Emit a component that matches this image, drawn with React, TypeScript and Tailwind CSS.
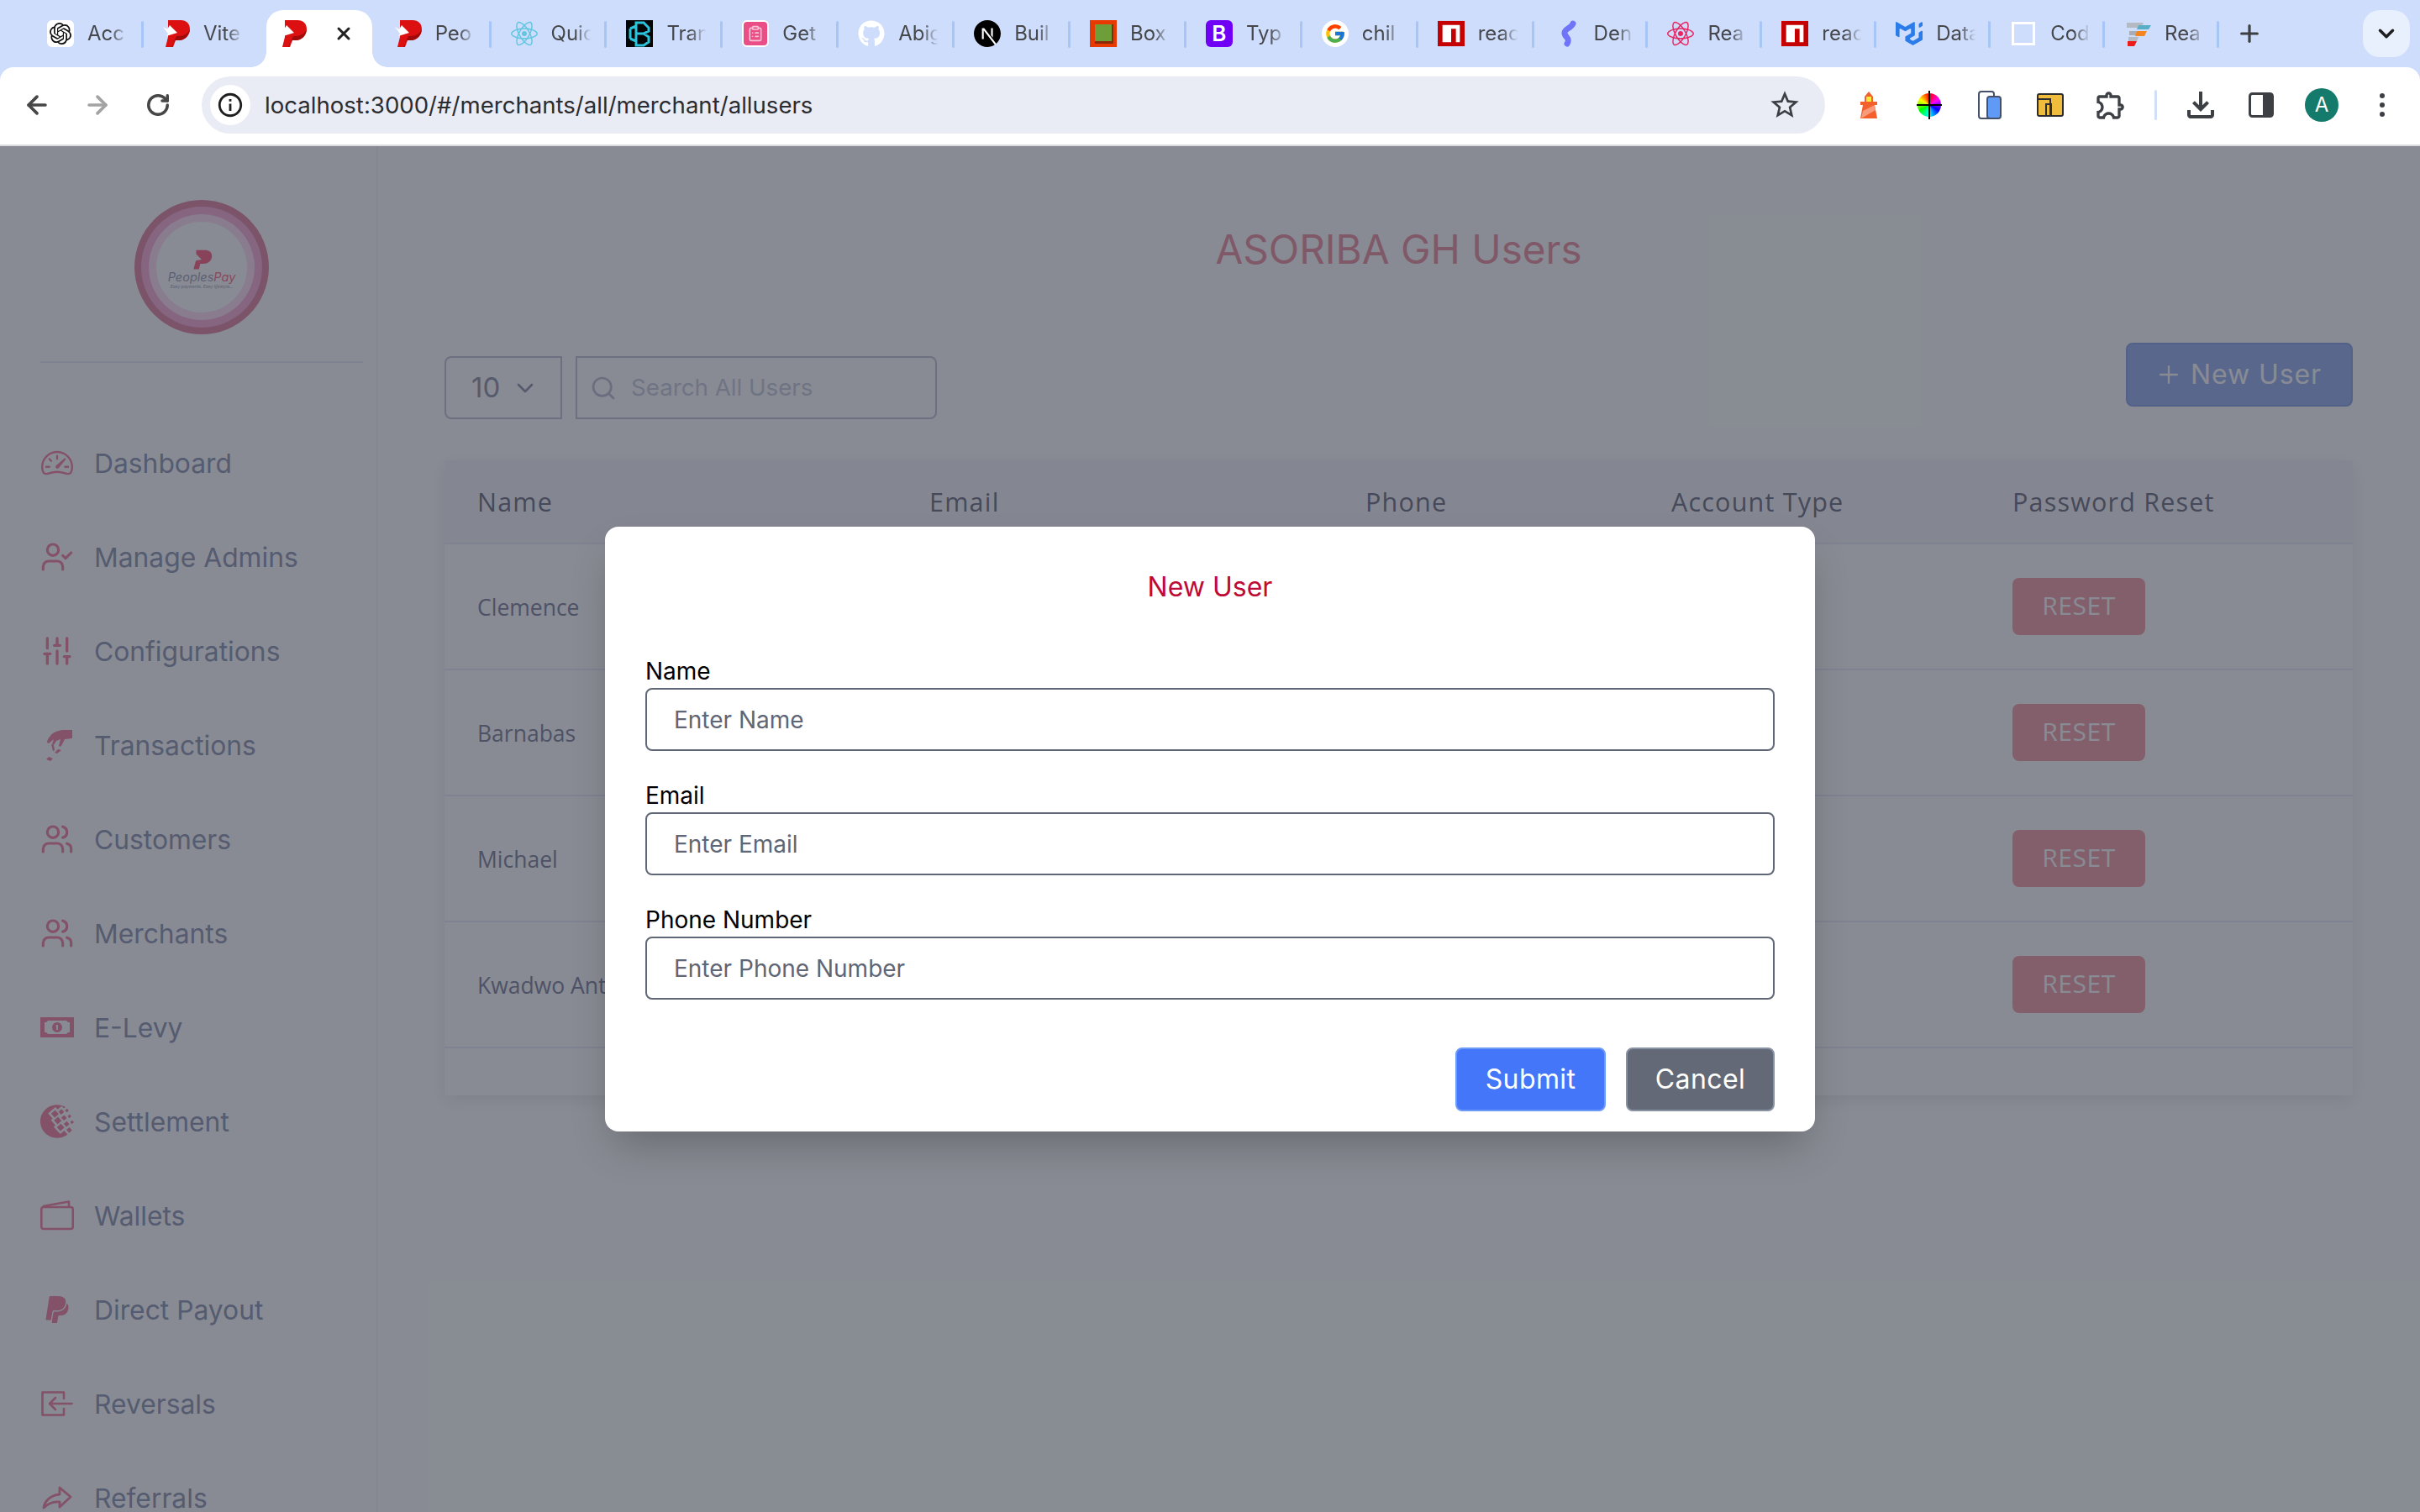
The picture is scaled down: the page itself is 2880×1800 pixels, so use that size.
import { ArrowLeft, ArrowRight, ChevronDown, ClipboardList, Plus, RotateCw, Search, SlidersVertical, UserCheck, Users, X } from "lucide-react";
import type { ReactNode } from "react";
import { BsSpeedometer2 } from "react-icons/bs";
import { FaGithub, FaPaypal } from "react-icons/fa";
import { FcGoogle } from "react-icons/fc";
import { MdInfoOutline, MdOutlineExtension, MdOutlineFileDownload, MdStarBorder } from "react-icons/md";
import { SiMui, SiNextdotjs, SiOpenai, SiReact, SiWebmoney } from "react-icons/si";

const PeoplesLogo = ({ size = 32 }: { size?: number }) => (
  <svg width={size} height={size} viewBox="0 0 32 32">
    <path d="M6 0h15c7 0 11 4 11 11s-6 13-13 13h-4l-3 8H3l3-12z" fill="#dc1010" />
    <path d="M13 24h6c7 0 12-6 13-13-2 5-8 8-13 8h-3l-6 13h1z" fill="#a00a0a" />
    <path d="M0 8l5 3 3-5 9 9-13 4 2-3z" fill="#fff" />
  </svg>
);

const NpmIcon = () => (
  <svg width="34" height="32" viewBox="0 0 34 32">
    <rect width="34" height="32" fill="#c40000" />
    <path d="M6 5h22v22h-5V10h-6v17H6z" fill="#fff" />
  </svg>
);

const favicons: ReactNode[] = [
  <div className="flex h-8 w-8 items-center justify-center rounded-md bg-white"><SiOpenai size={26} color="#111" /></div>,
  <PeoplesLogo />,
  <PeoplesLogo />,
  <PeoplesLogo />,
  <SiReact size={32} color="#62c6e0" />,
  <svg width="32" height="32" viewBox="0 0 32 32">
    <rect width="32" height="32" fill="#050505" />
    <path d="M12 3h9l6 6v4l-6 3 6 4v6l-6 4h-9zM12 16h9M12 3v26M5 10l7-3M5 22l7 3M5 10v12" fill="none" stroke="#2cc3dc" strokeWidth="3" />
  </svg>,
  <div className="flex h-8 w-8 items-center justify-center rounded-md border-2 border-white bg-[#e94f86]"><ClipboardList size={20} color="#f9c3d7" /></div>,
  <FaGithub size={32} color="#fff" />,
  <div className="flex h-8 w-8 items-center justify-center rounded-full bg-white"><SiNextdotjs size={32} color="#000" /></div>,
  <svg width="32" height="32" viewBox="0 0 32 32">
    <rect width="32" height="32" fill="#e83a00" />
    <rect x="6" y="5" width="22" height="23" fill="#8a2a08" />
    <rect x="6" y="5" width="20" height="20" fill="#6e9e3a" />
  </svg>,
  <div className="flex h-8 w-8 items-center justify-center rounded-md bg-[#6f00f5] text-[26px] font-semibold leading-none text-white">B</div>,
  <div className="flex h-8 w-8 items-center justify-center rounded-full bg-white"><FcGoogle size={26} /></div>,
  <NpmIcon />,
  <svg width="32" height="32" viewBox="0 0 32 32" fill="none">
    <path d="M23 4C21 10 12 10 13 16c1 5 7 5 3 12" stroke="#6f74f8" strokeWidth="7" strokeLinecap="round" />
  </svg>,
  <SiReact size={32} color="#ea2560" />,
  <NpmIcon />,
  <SiMui size={32} color="#2b7ce8" />,
  <div className="h-7 w-7 border-[3px] border-white" />,
  <svg width="32" height="32" viewBox="0 0 32 32">
    <path d="M3 3h20l-3 6H3z" fill="#b4b9c2" />
    <path d="M17 6h15l-3 5H15z" fill="#57aec6" />
    <path d="M6 13h10l-2 5H6z" fill="#a9adb6" />
    <path d="M15 13h12l-3 6H13z" fill="#f5851f" />
    <path d="M5 20h12l-2 5H5z" fill="#b4b9c2" />
    <path d="M4 25h11l-3 6H4z" fill="#ea1c1c" />
  </svg>,
];

const tabTitles = ["Acc", "Vite", "", "Peo", "Quic", "Tran", "Get", "Abig", "Buil", "Box", "Typ", "chil", "reac", "Den", "Rea", "reac", "Data", "Cod", "Rea"];

const ActiveTab = () => (
  <div className="relative ml-2 mr-1 mt-3 flex h-[68px] flex-1 items-start rounded-t-[20px] bg-white pl-[16px] pt-3">
    <span className="absolute -left-[18px] bottom-0 h-[18px] w-[18px] bg-[radial-gradient(circle_at_0_0,#cfddfd_17.5px,#ffffff_18px)]" />
    <span className="absolute -right-[18px] bottom-0 h-[18px] w-[18px] bg-[radial-gradient(circle_at_100%_0,#cfddfd_17.5px,#ffffff_18px)]" />
    {favicons[2]}
    <X className="ml-[32px] mt-[4px] text-[#222]" size={24} strokeWidth={3} />
  </div>
);

const TabStrip = () => (
  <div className="flex h-20 items-start pl-[33px]">
    {tabTitles.map((title, i) => (
      <div key={i} className={i < 13 ? "relative flex h-20 w-[137.9px] shrink-0" : "relative flex h-20 w-[135.9px] shrink-0"}>
        {i === 2 ? (
          <ActiveTab />
        ) : (
          <div className="mt-6 flex h-8 w-full items-center pl-[23px]">
            <div className="flex w-[32px] shrink-0 items-center justify-center">{favicons[i]}</div>
            <span className="ml-4 block w-[56px] whitespace-nowrap text-[24px] leading-8 text-[#45474b] [mask-image:linear-gradient(to_right,#000_50%,transparent_85%)]">
              {title}
            </span>
          </div>
        )}
        {i !== 1 && i !== 2 && (
          <span className="absolute right-0 top-[25px] h-8 w-[3px] rounded-full bg-[#a8c5f8]" />
        )}
      </div>
    ))}
    <div className="flex h-20 w-[72px] items-start justify-center pt-[24px]">
      <Plus size={32} color="#3c3f43" strokeWidth={2.4} />
    </div>
    <div className="ml-auto mr-3 mt-3 flex h-14 w-14 items-center justify-center rounded-[20px] bg-[#e8effd]">
      <ChevronDown size={30} color="#1f1f1f" strokeWidth={2.8} />
    </div>
  </div>
);

const ToolbarSlot = ({ children }: { children: ReactNode }) => (
  <div className="flex h-[72px] w-[72px] shrink-0 items-center justify-center">{children}</div>
);

const Toolbar = () => (
  <div className="flex h-[94px] items-center rounded-t-[16px] border-b-2 border-[#dadce0] bg-white pb-[2px] pl-2">
    <ToolbarSlot><ArrowLeft size={34} color="#474747" strokeWidth={2.6} /></ToolbarSlot>
    <ToolbarSlot><ArrowRight size={34} color="#a3a3a3" strokeWidth={2.6} /></ToolbarSlot>
    <ToolbarSlot><RotateCw size={30} color="#474747" strokeWidth={2.8} /></ToolbarSlot>
    <div className="ml-4 flex h-[68px] w-[1932px] items-center rounded-full bg-[#e9ebf5] pl-[10px]">
      <div className="flex h-12 w-12 items-center justify-center rounded-full bg-white">
        <MdInfoOutline size={34} color="#1f1f1f" />
      </div>
      <span className="ml-[17px] pt-[2px] text-[27.6px] text-[#2b2c30]">localhost:3000/#/merchants/all/merchant/allusers</span>
      <MdStarBorder className="ml-auto mr-[28px]" size={40} color="#3c3f43" />
    </div>
    <div className="ml-4 flex items-center">
      <ToolbarSlot>
        <svg width="26" height="32" viewBox="0 0 26 32">
          <path d="M13 0l5 6v6h5v4h-3l3 16H3l3-16H3v-4h5V6z" fill="#f4602c" />
          <rect x="10" y="6" width="6" height="6" fill="#fce83a" />
          <path d="M4 32l2-9 14-7 1 6z" fill="#f99a7a" />
        </svg>
      </ToolbarSlot>
      <ToolbarSlot>
        <div className="relative flex h-[34px] w-[34px] items-center justify-center">
          <div className="h-7 w-7 rounded-full bg-[conic-gradient(#ff0000,#ff00ff,#0000ff,#00ffff,#00ff00,#ffff00,#ff0000)]" />
          <span className="absolute h-[2px] w-[30px] bg-black" />
          <span className="absolute h-[34px] w-[2px] bg-black" />
        </div>
      </ToolbarSlot>
      <ToolbarSlot>
        <svg width="28" height="34" viewBox="0 0 28 34">
          <rect x="1" y="1" width="18" height="32" rx="3" fill="#fff" stroke="#45516b" strokeWidth="2" />
          <rect x="11" y="7" width="16" height="26" rx="3" fill="#5f9bf6" stroke="#45516b" strokeWidth="2" />
        </svg>
      </ToolbarSlot>
      <ToolbarSlot>
        <svg width="32" height="28" viewBox="0 0 32 28">
          <rect x="1" y="1" width="30" height="26" rx="2" fill="#f0bc3c" stroke="#2d2d2d" strokeWidth="2" />
          <path d="M2 7h14v19M11 26V13h6v13" fill="none" stroke="#2d2d2d" strokeWidth="2" />
        </svg>
      </ToolbarSlot>
      <ToolbarSlot><MdOutlineExtension size={40} color="#3c3f43" /></ToolbarSlot>
    </div>
    <span className="ml-4 h-9 w-[3px] rounded-full bg-[#d0def9]" />
    <div className="ml-4 flex items-center">
      <ToolbarSlot><MdOutlineFileDownload size={48} color="#3c3f43" /></ToolbarSlot>
      <ToolbarSlot>
        <svg width="30" height="30" viewBox="0 0 30 30">
          <rect x="1.5" y="1.5" width="27" height="27" rx="3" fill="#fff" stroke="#3c3f43" strokeWidth="3" />
          <rect x="17" y="1.5" width="11.5" height="27" fill="#3c3f43" />
        </svg>
      </ToolbarSlot>
      <ToolbarSlot>
        <div className="flex h-10 w-10 items-center justify-center rounded-full bg-[#137a6c] text-[24px] text-white">A</div>
      </ToolbarSlot>
      <ToolbarSlot>
        <div className="flex flex-col gap-[5px]">
          <span className="h-[6px] w-[6px] rounded-full bg-[#3c3f43]" />
          <span className="h-[6px] w-[6px] rounded-full bg-[#3c3f43]" />
          <span className="h-[6px] w-[6px] rounded-full bg-[#3c3f43]" />
        </div>
      </ToolbarSlot>
    </div>
  </div>
);

const HandIcon = () => (
  <svg width="40" height="40" viewBox="0 0 40 40" fill="currentColor">
    <path d="M38 2v10l-9 1c-2 4-3 6-5 9l-2-1 2-8-5 2-3 5-2-1 2-6-6 5-2-1c0-3 2-6 4-8 3-4 8-6 14-7z" />
    <path d="M13 19l3 1 1 6-2 1zM21 25l4 1-5 4-3-1zM7 37l3-3 5 2-3 3z" />
  </svg>
);

const CashIcon = () => (
  <svg width="40" height="24" viewBox="0 0 40 24" fill="currentColor">
    <path fillRule="evenodd" d="M0 0h40v24H0zM5 6v12h2l2 2h22l2-2h2V6h-2l-2-2H9L7 6z" />
    <path fillRule="evenodd" d="M20 6a6 6 0 1 1 0 12 6 6 0 0 1 0-12zm-1 3v1l-1 1h1v4h2V9z" />
  </svg>
);

const WalletIcon = () => (
  <svg width="40" height="36" viewBox="0 0 40 36" fill="none" stroke="currentColor" strokeWidth="2.6" strokeLinejoin="round">
    <rect x="1.3" y="8" width="37.4" height="26" rx="2.5" />
    <path d="M3 7l31-5.5V7" />
  </svg>
);

const ReversalIcon = () => (
  <svg width="38" height="30" viewBox="0 0 38 30" fill="none" stroke="currentColor" strokeWidth="2.6" strokeLinecap="round" strokeLinejoin="round">
    <path d="M27 9V1.5H1.5v27H27V21" />
    <path d="M36.5 15H11M17 8l-7 7 7 7" />
  </svg>
);

const ShareIcon = () => (
  <svg width="36" height="28" viewBox="0 0 36 28" fill="none" stroke="currentColor" strokeWidth="2.8" strokeLinejoin="round">
    <path d="M21 2l13 11-13 12v-6C13 18 7 21 2 26c1-8 8-15 19-16z" />
  </svg>
);

const sideItems: { label: string; icon: ReactNode }[] = [
  { label: "Dashboard", icon: <BsSpeedometer2 size={38} /> },
  { label: "Manage Admins", icon: <UserCheck size={46} strokeWidth={1.9} /> },
  { label: "Configurations", icon: <SlidersVertical size={44} strokeWidth={2} /> },
  { label: "Transactions", icon: <HandIcon /> },
  { label: "Customers", icon: <Users size={46} strokeWidth={1.9} /> },
  { label: "Merchants", icon: <Users size={46} strokeWidth={1.9} /> },
  { label: "E-Levy", icon: <CashIcon /> },
  { label: "Settlement", icon: <SiWebmoney size={42} /> },
  { label: "Wallets", icon: <WalletIcon /> },
  { label: "Direct Payout", icon: <FaPaypal size={36} /> },
  { label: "Reversals", icon: <ReversalIcon /> },
  { label: "Referrals", icon: <ShareIcon /> },
];

const Sidebar = () => (
  <aside className="w-[450px] shrink-0 border-r-2 border-[#f7f7fb]">
    <div className="flex w-[480px] justify-center pb-8 pt-16">
      <div className="h-40 w-40 rounded-full bg-[#e790ab] p-2">
        <div className="h-full w-full rounded-full bg-[#fbb2d9] p-[9px]">
          <div className="h-full w-full rounded-full bg-[#ffe0f5] p-[9px]">
            <div className="flex h-full w-full flex-col items-center justify-center rounded-full bg-white pt-1">
              <svg width="26" height="24" viewBox="0 0 32 28">
                <path d="M8 0h12c7 0 11 3 11 9s-5 11-12 11h-5l-2 8H4l4-14z" fill="#ff6f8c" />
                <path d="M0 6l5 4 3-4 8 8-12 2 2-3z" fill="#fff" />
              </svg>
              <span className="text-[14.5px] italic leading-[17px] text-[#a7a8bd]">
                Peoples<span className="text-[#ff7a94]">Pay</span>
              </span>
              <span className="text-[5px] italic leading-[6px] text-[#a7a8bd]">Easy payments. Easy lifestyle...</span>
            </div>
          </div>
        </div>
      </div>
    </div>
    <div className="ml-12 w-[384px] border-t-2 border-[#edeef9]" />
    <nav className="mt-[63px]">
      {sideItems.map((item) => (
        <div key={item.label} className="flex h-28 items-center pl-12">
          <div className="flex w-10 shrink-0 items-center justify-center text-[#f48aa8]">{item.icon}</div>
          <span className="ml-[24px] pt-[2px] text-[31.8px] text-[#999fb8]">{item.label}</span>
        </div>
      ))}
    </nav>
  </aside>
);

const users = ["Clemence", "Barnabas", "Michael", "Kwadwo Anthony"];
const headers = ["Name", "Email", "Phone", "Account Type", "Password Reset"];

const UsersPage = () => (
  <main className="flex-1 pl-[79px] pr-[80px] pt-[93px]">
    <h1 className="text-center text-[47.6px] leading-[60px] text-[#ee9bab]">ASORIBA GH Users</h1>
    <div className="mt-[81px] flex items-start justify-between">
      <div className="mt-4 flex gap-4">
        <div className="flex h-[75px] w-[140px] items-center rounded-l-lg border-2 border-[#c7c8d9] pl-[30px] text-[33px] text-[#999cb1]">
          10
          <ChevronDown className="ml-[14px]" size={32} color="#999cb1" strokeWidth={2} />
        </div>
        <div className="flex h-[75px] w-[430px] items-center rounded-r-lg border-2 border-[#c7c8d9] pl-[15px] text-[27.7px] text-[#cdd0e1]">
          <Search size={32} color="#c2c5d8" strokeWidth={2} />
          <span className="ml-[17px] pt-[1px]">Search All Users</span>
        </div>
      </div>
      <button className="flex h-[76px] w-[270px] items-center rounded-lg border-2 border-[#94aaea] bg-[#a0b6f2] pl-[32px] text-[32px] text-white">
        <Plus size={34} strokeWidth={1.6} />
        <span className="ml-[9px] tracking-[0.9px]">New User</span>
      </button>
    </div>
    <div className="mt-[49px] overflow-hidden shadow-[0_6px_20px_rgba(0,0,0,0.08)]">
      <table className="w-[2271px] table-fixed font-['Open_Sans',sans-serif]">
        <colgroup>
          <col className="w-[538px]" />
          <col className="w-[519px]" />
          <col className="w-[364px]" />
          <col className="w-[406px]" />
          <col className="w-[444px]" />
        </colgroup>
        <thead>
          <tr className="h-[99px] border-b-2 border-[#ededf9] bg-[#f6f6fa]">
            {headers.map((h) => (
              <th key={h} className="pl-[39px] pt-[1px] text-left text-[30.5px] font-normal tracking-[1.2px] text-[#7a7b8a]">{h}</th>
            ))}
          </tr>
        </thead>
        <tbody>
          {users.map((name) => (
            <tr key={name} className="h-[150px] border-b-2 border-[#ededf9]">
              <td className="whitespace-nowrap pl-[39px] pt-[3px] text-[26.5px] text-[#8a8ca5]">{name}</td>
              <td />
              <td />
              <td />
              <td className="pl-[39px]">
                <button className="h-[68px] w-[158px] rounded-lg bg-[#f5a6b0] pb-[3px] text-[30px] tracking-[0.5px] text-white">RESET</button>
              </td>
            </tr>
          ))}
          <tr className="h-[57px]"><td colSpan={5} /></tr>
        </tbody>
      </table>
    </div>
  </main>
);

const fields = [
  { label: "Name", placeholder: "Enter Name" },
  { label: "Email", placeholder: "Enter Email" },
  { label: "Phone Number", placeholder: "Enter Phone Number" },
];

const NewUserModal = () => (
  <div className="absolute inset-0 flex items-center justify-center bg-[#111827]/50">
    <div className="h-[720px] w-[1440px] rounded-2xl bg-white px-12 pt-[52px] shadow-2xl">
      <h2 className="text-center text-[32px] leading-10 text-[#be0a35]">New User</h2>
      <div className="mt-[64px] flex flex-col gap-[37px]">
        {fields.map((f) => (
          <label key={f.label} className="block">
            <span className="block h-9 text-[28px] leading-8 text-black">{f.label}</span>
            <input
              readOnly
              placeholder={f.placeholder}
              className="block h-[75px] w-full rounded-lg border-2 border-[#606776] px-[32px] text-[28px] outline-none placeholder:text-[#5f6675]"
            />
          </label>
        ))}
      </div>
      <div className="mt-[57px] flex justify-end gap-[24px]">
        <button className="h-[76px] w-[179px] rounded-lg border-2 border-[#6d99f7] bg-[#4376f8] text-[32px] tracking-[0.4px] text-white">Submit</button>
        <button className="h-[76px] w-[177px] rounded-lg border-2 border-[#8792a2] bg-[#636977] text-[32px] tracking-[0.4px] text-white">Cancel</button>
      </div>
    </div>
  </div>
);

const App = () => {
  return (
    <div className="h-[1800px] w-[2880px] overflow-hidden bg-[#cfddfd] font-[Inter,sans-serif]">
      <TabStrip />
      <Toolbar />
      <div className="relative flex h-[1626px] overflow-hidden bg-white">
        <Sidebar />
        <UsersPage />
        <NewUserModal />
      </div>
    </div>
  );
};

export default App;
